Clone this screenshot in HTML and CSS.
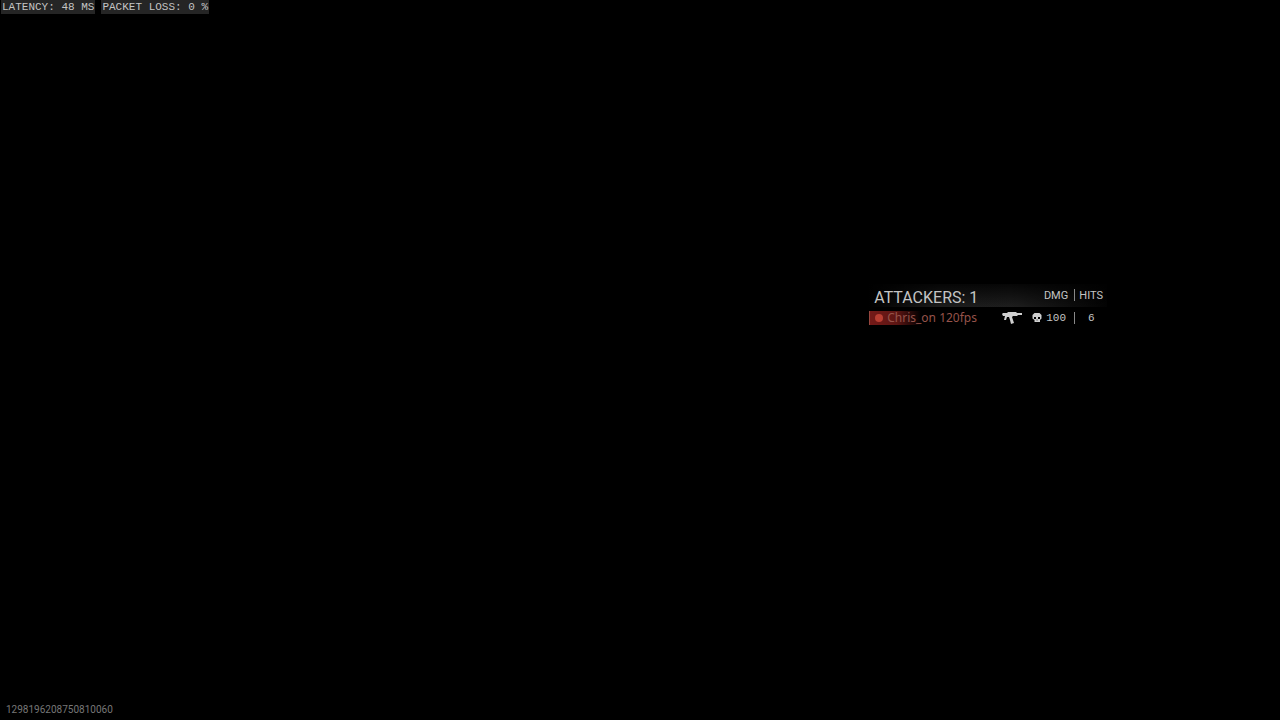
FILE: index.html
```
<!DOCTYPE html>
<html lang="en">
<head>
<meta charset="UTF-8">
<meta name="viewport" content="width=device-width, initial-scale=1.0">
<title>Attackers</title>
<link rel="stylesheet" href="styles.css">
</head>
<body>
<header class="network">
  <span class="stat">LATENCY: 48 MS</span>
  <span class="stat">PACKET LOSS: 0 %</span>
</header>

<main class="screen">
  <table class="attackers">
    <colgroup>
      <col class="col-name">
      <col class="col-weapon">
      <col class="col-dmg">
      <col class="col-hits">
    </colgroup>
    <thead>
      <tr>
        <th class="title" colspan="2">ATTACKERS: 1</th>
        <th class="dmg">DMG</th>
        <th class="hits">HITS</th>
      </tr>
    </thead>
    <tbody>
      <tr>
        <td class="name">
          <div class="player"><span class="dot"></span>Chris_on 120fps</div>
        </td>
        <td class="weapon">
          <svg width="22" height="14" viewBox="0 0 22 14" aria-label="Submachine gun">
            <path d="M1 3 L2 2 L6 2 L7 1 L15 1 L16 2 L21 2 L21 4 L17 4 L16 5 L12 5 L11 6 L12 9 L13 12 L10 13 L9 9 L8 6 L6 6 L5 9 L3 9 L4 5 L2 5 Z"/>
          </svg>
        </td>
        <td class="dmg">
          <div class="damage">
            <svg width="10" height="10" viewBox="0 0 10 10" aria-label="Killed">
              <path fill-rule="evenodd" d="M2.5 0 H7.5 L9.5 2 V5.5 L8 7 V9 H2.5 V7 L0.5 5.5 V2 Z M2 4 V6 H4 V4 Z M6 4 V6 H8 V4 Z M4.6 6.5 V7.5 H5.5 V6.5 Z"/>
            </svg>
            100
          </div>
        </td>
        <td class="hits">6</td>
      </tr>
    </tbody>
  </table>
</main>

<footer class="match-id">1298196208750810060</footer>
</body>
</html>
```

FILE: styles.css
```
* {
  box-sizing: border-box;
}

body {
  display: flex;
  flex-direction: column;
  min-height: 100vh;
  margin: 0;
  background-color: #000;
  color: #c4c4c4;
  font-family: Roboto, Arial, sans-serif;
}

.network {
  display: flex;
  gap: 6px;
  padding-left: 1px;
  font: 11px/14px "Liberation Mono", monospace;
}

.stat {
  padding: 0 1px;
  background-color: #252525;
}

.screen {
  flex: 1;
  display: flex;
  justify-content: flex-end;
  align-items: flex-start;
  padding: 270px 13.5vw 0 0;
}

.attackers {
  width: 238px;
  border-collapse: collapse;
  table-layout: fixed;
}

.col-name {
  width: 123px;
}

.col-weapon {
  width: 40px;
}

.col-dmg {
  width: 42px;
}

.col-hits {
  width: 33px;
}

th, td {
  padding: 0;
  font-weight: normal;
  white-space: nowrap;
}

thead {
  background:
    linear-gradient(to bottom, rgba(0, 0, 0, 0.8), transparent),
    linear-gradient(to right, #000, #1c1c1c 30%, #1e1e1e 60%, #030303);
}

thead th {
  height: 23px;
}

.title {
  padding: 4px 0 0 5px;
  font-size: 16px;
  line-height: 18px;
  text-align: left;
}

thead .dmg, thead .hits {
  font-size: 11px;
  line-height: 14px;
}

/* short divider between the damage and hits columns */
.hits::before {
  content: "";
  float: left;
  width: 1px;
  height: 12px;
  background-color: #888;
}

.hits {
  text-align: center;
}

thead .dmg {
  padding-right: 6px;
  text-align: right;
}

tbody td {
  height: 22px;
  font: 11px/12px "Liberation Mono", monospace;
}

.player {
  display: flex;
  align-items: center;
  gap: 4px;
  height: 14px;
  padding-left: 5px;
  border-left: 1px solid #96463e;
  background: linear-gradient(to right, #741a18, #5d1513 22%, #000 42%);
  color: #96534a;
  font: 12px/14px "Noto Sans", sans-serif;
}

.dot {
  width: 8px;
  height: 8px;
  border-radius: 50%;
  background-color: #b83e32;
}

.weapon svg {
  display: block;
  margin-left: 9px;
}

.damage {
  display: flex;
  align-items: center;
  gap: 4px;
}

svg {
  fill: #cfcfcf;
}

.match-id {
  padding: 0 0 3px 6px;
  color: #777;
  font-size: 10px;
  line-height: 14px;
}
```
